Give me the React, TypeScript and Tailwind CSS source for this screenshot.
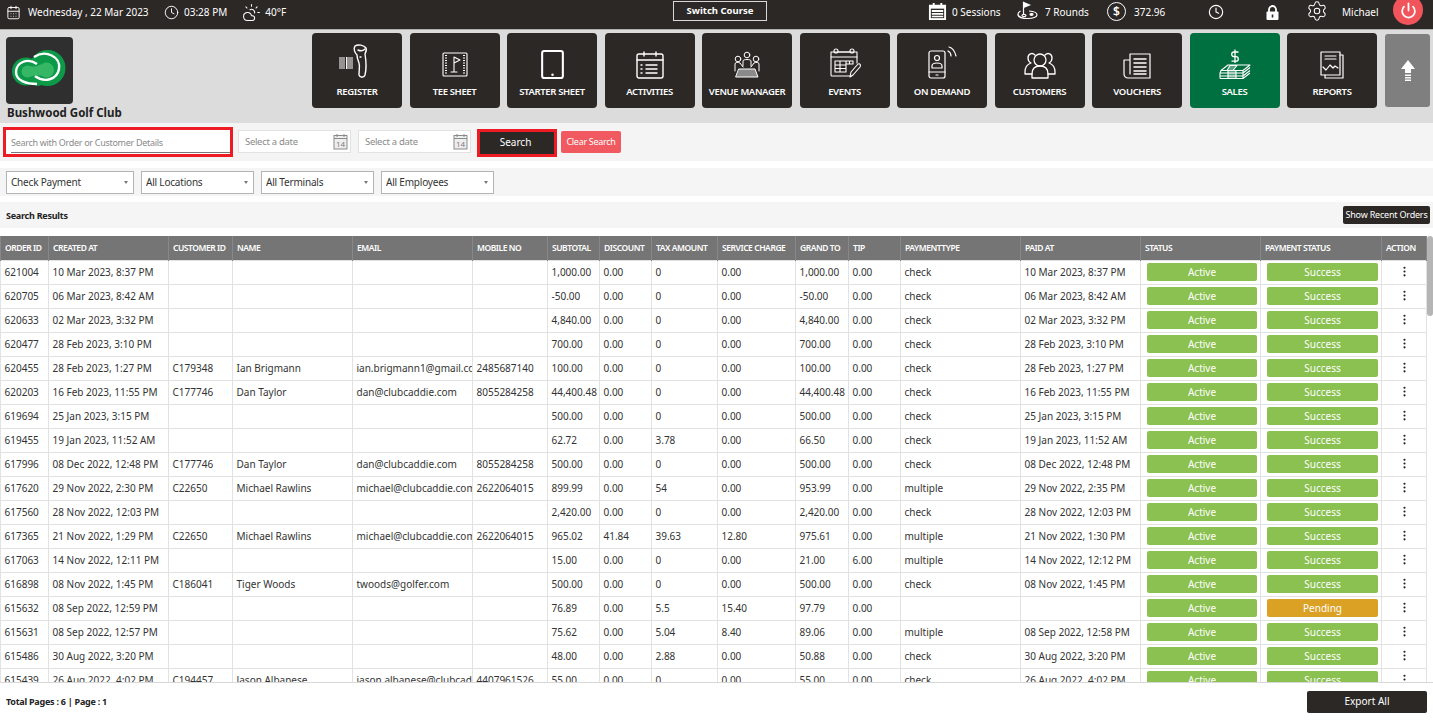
import { CalendarDays, Clock, CloudSun, Settings, Power, EllipsisVertical } from 'lucide-react'

type Row = {
  id: string
  created: string
  cust?: string
  name?: string
  email?: string
  mobile?: string
  sub: string
  disc?: string
  tax: string
  svc?: string
  grand: string
  tip?: string
  type?: string
  paid?: string
  pending?: boolean
}

const rows: Row[] = [
  { id: '621004', created: '10 Mar 2023, 8:37 PM', sub: '1,000.00', tax: '0', grand: '1,000.00', type: 'check', paid: '10 Mar 2023, 8:37 PM' },
  { id: '620705', created: '06 Mar 2023, 8:42 AM', sub: '-50.00', tax: '0', grand: '-50.00', type: 'check', paid: '06 Mar 2023, 8:42 AM' },
  { id: '620633', created: '02 Mar 2023, 3:32 PM', sub: '4,840.00', tax: '0', grand: '4,840.00', type: 'check', paid: '02 Mar 2023, 3:32 PM' },
  { id: '620477', created: '28 Feb 2023, 3:10 PM', sub: '700.00', tax: '0', grand: '700.00', type: 'check', paid: '28 Feb 2023, 3:10 PM' },
  { id: '620455', created: '28 Feb 2023, 1:27 PM', cust: 'C179348', name: 'Ian Brigmann', email: 'ian.brigmann1@gmail.com', mobile: '2485687140', sub: '100.00', tax: '0', grand: '100.00', type: 'check', paid: '28 Feb 2023, 1:27 PM' },
  { id: '620203', created: '16 Feb 2023, 11:55 PM', cust: 'C177746', name: 'Dan Taylor', email: 'dan@clubcaddie.com', mobile: '8055284258', sub: '44,400.48', tax: '0', grand: '44,400.48', type: 'check', paid: '16 Feb 2023, 11:55 PM' },
  { id: '619694', created: '25 Jan 2023, 3:15 PM', sub: '500.00', tax: '0', grand: '500.00', type: 'check', paid: '25 Jan 2023, 3:15 PM' },
  { id: '619455', created: '19 Jan 2023, 11:52 AM', sub: '62.72', tax: '3.78', grand: '66.50', type: 'check', paid: '19 Jan 2023, 11:52 AM' },
  { id: '617996', created: '08 Dec 2022, 12:48 PM', cust: 'C177746', name: 'Dan Taylor', email: 'dan@clubcaddie.com', mobile: '8055284258', sub: '500.00', tax: '0', grand: '500.00', type: 'check', paid: '08 Dec 2022, 12:48 PM' },
  { id: '617620', created: '29 Nov 2022, 2:30 PM', cust: 'C22650', name: 'Michael Rawlins', email: 'michael@clubcaddie.com', mobile: '2622064015', sub: '899.99', tax: '54', grand: '953.99', type: 'multiple', paid: '29 Nov 2022, 2:35 PM' },
  { id: '617560', created: '28 Nov 2022, 12:03 PM', sub: '2,420.00', tax: '0', grand: '2,420.00', type: 'check', paid: '28 Nov 2022, 12:03 PM' },
  { id: '617365', created: '21 Nov 2022, 1:29 PM', cust: 'C22650', name: 'Michael Rawlins', email: 'michael@clubcaddie.com', mobile: '2622064015', sub: '965.02', disc: '41.84', tax: '39.63', svc: '12.80', grand: '975.61', type: 'multiple', paid: '21 Nov 2022, 1:30 PM' },
  { id: '617063', created: '14 Nov 2022, 12:11 PM', sub: '15.00', tax: '0', grand: '21.00', tip: '6.00', type: 'multiple', paid: '14 Nov 2022, 12:12 PM' },
  { id: '616898', created: '08 Nov 2022, 1:45 PM', cust: 'C186041', name: 'Tiger Woods', email: 'twoods@golfer.com', sub: '500.00', tax: '0', grand: '500.00', type: 'check', paid: '08 Nov 2022, 1:45 PM' },
  { id: '615632', created: '08 Sep 2022, 12:59 PM', sub: '76.89', tax: '5.5', svc: '15.40', grand: '97.79', pending: true },
  { id: '615631', created: '08 Sep 2022, 12:57 PM', sub: '75.62', tax: '5.04', svc: '8.40', grand: '89.06', type: 'multiple', paid: '08 Sep 2022, 12:58 PM' },
  { id: '615486', created: '30 Aug 2022, 3:20 PM', sub: '48.00', tax: '2.88', grand: '50.88', type: 'check', paid: '30 Aug 2022, 3:20 PM' },
  { id: '615439', created: '26 Aug 2022, 4:02 PM', cust: 'C194457', name: 'Jason Albanese', email: 'jason.albanese@clubcaddie.com', mobile: '4407961526', sub: '55.00', tax: '0', grand: '55.00', type: 'check', paid: '26 Aug 2022, 4:02 PM' },
]

const cols = [
  { title: 'ORDER ID', w: 'w-[48px]' },
  { title: 'CREATED AT', w: 'w-[120px]' },
  { title: 'CUSTOMER ID', w: 'w-[64px]' },
  { title: 'NAME', w: 'w-[120px]' },
  { title: 'EMAIL', w: 'w-[120px]' },
  { title: 'MOBILE NO', w: 'w-[75px]' },
  { title: 'SUBTOTAL', w: 'w-[52px]' },
  { title: 'DISCOUNT', w: 'w-[52px]' },
  { title: 'TAX AMOUNT', w: 'w-[66px]' },
  { title: 'SERVICE CHARGE', w: 'w-[78px]' },
  { title: 'GRAND TO', w: 'w-[53px]' },
  { title: 'TIP', w: 'w-[52px]' },
  { title: 'PAYMENTTYPE', w: 'w-[120px]' },
  { title: 'PAID AT', w: 'w-[120px]' },
  { title: 'STATUS', w: 'w-[120px]' },
  { title: 'PAYMENT STATUS', w: 'w-[121px]' },
  { title: 'ACTION', w: 'w-[45px]' },
]

const ic = { fill: 'none', stroke: 'white', strokeWidth: 1.4, strokeLinejoin: 'round', strokeLinecap: 'round' } as const

const ScannerIcon = () => (
  <svg width="36" height="36" viewBox="0 0 36 36" {...ic}>
    <path d="M16 3c3-2 9-1 11 2 1 2 0 4-1 6 1 6 2 13 0 21-1 3-5 3-6 0 0-5 1-9 0-12-1-3-2-5-2-8-2-2-4-6-2-9z" />
    <path d="M19 7c2 1 5 1 7-1M21 14h1" />
    <path d="M1 14v12M3 14v12M5 14v12M7.500 14v12M9 14v12M11 14v12M13 14v12" strokeWidth="1" strokeLinecap="butt" />
  </svg>
)
const TeeIcon = () => (
  <svg width="28" height="30" viewBox="0 0 28 28" {...ic} strokeWidth="1.100">
    <rect x="2" y="3" width="24" height="23" rx="1" />
    <path d="M13 22V7l6 3-6 3M10 22h6" />
    <path d="M5 5v19M23 5v19" strokeDasharray="1 1.500" strokeWidth="2" strokeLinecap="butt" />
  </svg>
)
const TabletIcon = () => (
  <svg width="23" height="29" viewBox="0 0 22 28">
    <rect x="1" y="1" width="20" height="26" rx="2" fill="none" stroke="white" strokeWidth="2" />
    <rect x="3" y="4" width="16" height="17" fill="#2c2826" />
    <circle cx="11" cy="24" r="1.200" fill="white" />
  </svg>
)
const ActivitiesIcon = () => (
  <svg width="28" height="28" viewBox="0 0 28 28" {...ic}>
    <rect x="1" y="3" width="26" height="24" rx="2" />
    <path d="M1 9h26M8 1v4M20 1v4M10 14h11M10 18h11M10 22h11M5 14h1M5 18h1M5 22h1" />
  </svg>
)
const VenueIcon = () => (
  <svg width="28" height="28" viewBox="0 0 28 28" {...ic} strokeWidth="1">
    <circle cx="14" cy="4" r="2.800" />
    <circle cx="5" cy="8" r="2.800" />
    <circle cx="23" cy="8" r="2.800" />
    <path d="M10 15v-5c0-2 8-2 8 0v5M2 20v-7c0-2 3-2 5-1l3 4M26 20v-7c0-2-3-2-5-1l-3 4" />
    <path d="M6 18h16l3 8H3z" fill="#8a8a8a" />
  </svg>
)
const EventsIcon = () => (
  <svg width="32" height="32" viewBox="0 0 32 32" {...ic} strokeWidth="1.100">
    <path d="M22 29H3a1 1 0 0 1-1-1V5h26v11" />
    <path d="M2 10h26M9 5h12" />
    <circle cx="7" cy="4" r="2" />
    <circle cx="23" cy="4" r="2" />
    <path d="M6 14h18v3H17v8H6zM6 18h11M6 21.500h11M11 14v11M17 14v3M20.500 14v3" />
    <path d="M21 30l1-5 7-8c2-1 3 1 2 3l-7 8z" />
  </svg>
)
const DemandIcon = () => (
  <svg width="32" height="34" viewBox="0 0 32 34" {...ic} strokeWidth="1.200">
    <rect x="3" y="6" width="16" height="27" rx="2" />
    <path d="M3 27h16M10 30h2" />
    <circle cx="11" cy="13" r="2.500" />
    <path d="M6 23v-2c0-4 10-4 10 0v2zM22 6c2 1 3 3 3 5M23 2c4 1 6 5 7 9" />
  </svg>
)
const CustomersIcon = () => (
  <svg width="32" height="28" viewBox="0 0 32 28" {...ic} strokeWidth="1.300">
    <circle cx="16" cy="9" r="6" />
    <path d="M8 27v-4c0-6 4-8 8-8s8 2 8 8v4z" />
    <path d="M11 4c-3-3-7-1-7 3 0 2 1 4 3 5-3 1-6 4-6 9v2h7M21 4c3-3 7-1 7 3 0 2-1 4-3 5 3 1 6 4 6 9v2h-7" />
  </svg>
)
const VouchersIcon = () => (
  <svg width="28" height="26" viewBox="0 0 28 26" {...ic} strokeWidth="1.200">
    <path d="M7 1h20v24H5a4 4 0 0 1-4-4V7h6zM7 7v14" />
    <path d="M11 6h12M11 10h12M11 14h12M11 18h12M11 21h12" strokeWidth="1.500" />
  </svg>
)
const SalesIcon = () => (
  <svg width="32" height="30" viewBox="0 0 32 30" {...ic} strokeWidth="1.100" strokeLinecap="butt">
    <path d="M19.500 3h-4.500a2.300 2.300 0 0 0 0 4.600h2a2.300 2.300 0 0 1 0 4.600h-4.500M16 0.500v13.500" strokeWidth="1.300" />
    <path d="M9 16h22l-7 5.500H2zM2 21.500L1 24h23l7-5.500M1 27h23l7-5.500M1 29.500h23l7-5.500M1 24v5.500M24 21.500v8" />
    <path d="M11 16.500h7l-4 5h-6zM9 21.500h8v8h-8z" fill="white" fillOpacity="0.350" />
  </svg>
)
const ReportsIcon = () => (
  <svg width="24" height="28" viewBox="0 0 24 28" {...ic} strokeWidth="1.200">
    <path d="M20 4h3v23H5v-3" />
    <rect x="1" y="1" width="19" height="23" />
    <path d="M5 5h11M5 8h11M3 16l3 3 4-5 3 3 2-2 3 2" />
  </svg>
)
const ArrowUpIcon = () => (
  <svg width="14" height="22" viewBox="0 0 14 22" fill="white">
    <path d="M7 0l7 9H10v4H4V9H0z" />
    <path d="M4 14.500h6v1.500H4zM4 17h6v1.500H4zM4 19.500h6v1.500H4z" />
  </svg>
)

const tiles = [
  { label: 'REGISTER', icon: <ScannerIcon /> },
  { label: 'TEE SHEET', icon: <TeeIcon /> },
  { label: 'STARTER SHEET', icon: <TabletIcon /> },
  { label: 'ACTIVITIES', icon: <ActivitiesIcon /> },
  { label: 'VENUE MANAGER', icon: <VenueIcon /> },
  { label: 'EVENTS', icon: <EventsIcon /> },
  { label: 'ON DEMAND', icon: <DemandIcon /> },
  { label: 'CUSTOMERS', icon: <CustomersIcon /> },
  { label: 'VOUCHERS', icon: <VouchersIcon /> },
  { label: 'SALES', icon: <SalesIcon />, active: true },
  { label: 'REPORTS', icon: <ReportsIcon /> },
]

function DateInput({ className }: { className: string }) {
  return (
    <div className={`flex h-[23px] w-[113px] items-center justify-between border border-[#e2e2e2] bg-white pl-[6px] pr-[2px] ${className}`}>
      <span className="pt-[2px] text-[9.500px] tracking-[-0.3px] text-[#8a8a8a]">Select a date</span>
      <svg width="15" height="17" viewBox="0 0 15 17" fill="none" stroke="#8a8a8a">
        <rect x="1" y="2.500" width="13" height="13.500" fill="#eee" />
        <path d="M1 5.500h13M4 1v3M11 1v3" />
        <text x="3" y="14" fontSize="8" fill="#777" stroke="none" fontFamily="Open Sans">14</text>
      </svg>
    </div>
  )
}

function Select({ label, w }: { label: string; w: string }) {
  return (
    <div className={`flex h-[23px] items-center justify-between border border-[#b4b4b4] bg-white pl-[4px] pr-[5px] ${w}`}>
      <span className="text-[10px] tracking-[-0.2px] text-[#333]">{label}</span>
      <span className="h-0 w-0 border-x-[2.500px] border-t-[3px] border-x-transparent border-t-[#777]" />
    </div>
  )
}

export default function App() {
  return (
    <div className="relative flex h-screen flex-col overflow-hidden bg-white font-['Open_Sans',sans-serif] text-[#2b2b2b]">
      <div className="relative flex h-[29px] shrink-0 items-center bg-[#2c2826] pb-[5px] text-[10px] text-white">
        <CalendarDays size={15} className="ml-[6px]" strokeWidth={1.500} />
        <span className="ml-[7px] w-[130px]">Wednesday , 22 Mar 2023</span>
        <Clock size={15} strokeWidth={1.500} className="ml-[6px]" />
        <span className="ml-[5px]">03:28 PM</span>
        <CloudSun size={19} strokeWidth={1.300} className="ml-[15px]" />
        <span className="ml-[4px]">40°F</span>

        <button className="absolute left-[673px] top-[1px] h-[20px] w-[94px] border border-[#d8d8d8] text-[9.500px] font-bold text-white">
          Switch Course
        </button>

        <svg width="19" height="19" viewBox="0 0 20 20" className="absolute left-[928px] top-[2px]" fill="white">
          <path d="M1 3h18v16H1zM5 1h2v3H5zM13 1h2v3h-2z" />
          <path d="M3 7h14v10H3z" fill="#2c2826" />
          <path d="M4 8.500h12v2H4zM4 11.500h12v2H4zM4 14.500h12v1.500H4z" />
        </svg>
        <span className="absolute left-[952px]">0 Sessions</span>
        <svg width="21" height="20" viewBox="0 0 21 20" className="absolute left-[1017px] top-[1px]" fill="none" stroke="white" strokeWidth="1.200">
          <path d="M6.500 13V1.500l6 2.500-6 2.500" fill="white" />
          <path d="M3.500 10C1.500 11 .7 12.500 1 14c.5 2 5 3.500 10 3.500s9-1.500 9-3.500c0-2-3-3.700-8-4" />
          <ellipse cx="7" cy="14.500" rx="2" ry="1.200" />
          <ellipse cx="14.500" cy="13.500" rx="1.500" ry=".8" fill="white" />
        </svg>
        <span className="absolute left-[1045px]">7 Rounds</span>
        <div className="absolute left-[1107px] top-[2px] flex h-[19px] w-[19px] items-center justify-center rounded-full border border-white text-[12px] font-semibold leading-none">$</div>
        <span className="absolute left-[1134px]">372.96</span>
        <Clock size={16} strokeWidth={1.700} className="absolute left-[1208px] top-[4px]" />
        <svg width="13" height="15" viewBox="0 0 13 15" className="absolute left-[1266px] top-[5px]">
          <path d="M3 7V4.500a3.500 3.500 0 0 1 7 0V7" fill="none" stroke="white" strokeWidth="1.800" />
          <rect x="0.500" y="6.500" width="12" height="8.500" rx="1" fill="white" />
          <path d="M5.700 9.500h1.600v3H5.700z" fill="#2c2826" />
        </svg>
        <Settings size={22} strokeWidth={1.100} className="absolute left-[1306px] top-[0px]" />
        <span className="absolute left-[1342px]">Michael</span>
        <div className="absolute left-[1393px] top-[-5px] flex h-[30px] w-[30px] items-center justify-center rounded-full bg-[#f2545b]">
          <Power size={17} strokeWidth={2.500} />
        </div>
      </div>

      <div className="relative h-[94px] shrink-0 border-t border-[#b0b0b0] bg-[#dcdcdc]">
        <div className="absolute left-[6px] top-[7px] h-[67px] w-[67px] rounded-[4px] bg-[#2f2f2f]">
          <svg width="67" height="67" viewBox="0 0 67 67" fill="none">
            <circle cx="20" cy="34.500" r="14" fill="#0d9a48" />
            <circle cx="41.500" cy="31" r="18" fill="#0d9a48" />
            <circle cx="32" cy="39" r="10" fill="#0d9a48" />
            <path d="M28 20C40 12 55 20 53 32 51 43 38 46 29 39" stroke="white" strokeWidth="2.400" />
            <path d="M31 27C21 20 10 26 10 35 10 44 21 47 31 47" stroke="white" strokeWidth="2.400" />
            <circle cx="21.500" cy="34.500" r="6" fill="#35b765" />
            <circle cx="40.500" cy="33" r="7.500" fill="#35b765" />
            <path d="M21 29C27 29 29 31 35 27L35 39C29 37 27 40 21 40z" fill="#35b765" />
          </svg>
        </div>
        <div className="absolute left-[7px] top-[75px] text-[11.500px] font-bold leading-[16px] text-[#222]">Bushwood Golf Club</div>

        <div className="absolute left-[312px] top-[3px] flex gap-[7.500px]">
          {tiles.map((t) => (
            <div
              key={t.label}
              className={`flex h-[75px] w-[90px] flex-col items-center rounded-[4px] text-white ${t.active ? 'bg-[#007040]' : 'bg-[#2c2826]'}`}
            >
              <div className="flex h-[47px] w-full items-end justify-center pb-[1px]">{t.icon}</div>
              <div className="mt-[5px] text-[9.500px] font-semibold leading-[14px] tracking-[-0.35px]">{t.label}</div>
            </div>
          ))}
        </div>
        <div className="absolute left-[1385px] top-[4px] flex h-[73px] w-[45px] items-center justify-center rounded-[3px] bg-[#7f7f7f]">
          <ArrowUpIcon />
        </div>
      </div>

      <div className="relative h-[38px] shrink-0 bg-[#f4f4f4]">
        <div className="absolute left-[3px] top-[4px] h-[30px] w-[230px] border-[3px] border-[#ed1c24] bg-white pl-[5px]">
          <div className="flex h-[23px] w-full items-center border-b border-[#777] pt-[3px] text-[9px] tracking-[-0.3px] text-[#8a8a8a]">Search with Order or Customer Details</div>
        </div>
        <DateInput className="absolute left-[238px] top-[7px]" />
        <DateInput className="absolute left-[358px] top-[7px]" />
        <div className="absolute left-[477px] top-[6px] flex h-[28px] w-[80px] items-center justify-center border-[3px] border-[#ed1c24] bg-[#2c2826] pb-[2px] pr-[3px] text-[10px] text-white">Search</div>
        <div className="absolute left-[561px] top-[8px] flex h-[22px] w-[60px] items-center justify-center rounded-[2px] bg-[#f0595f] text-[9px] tracking-[-0.3px] text-white">Clear Search</div>
      </div>

      <div className="h-[7px] shrink-0 bg-white" />
      <div className="flex h-[28px] shrink-0 items-center gap-[7px] bg-[#f5f5f5] pl-[6px]">
        <Select label="Check Payment" w="w-[128px]" />
        <Select label="All Locations" w="w-[113px]" />
        <Select label="All Terminals" w="w-[113px]" />
        <Select label="All Employees" w="w-[113px]" />
      </div>
      <div className="h-[6px] shrink-0 bg-white" />
      <div className="flex h-[26px] shrink-0 items-center justify-between bg-[#f5f5f5] pl-[6px] pr-[3px]">
        <span className="pt-[1px] text-[9px] font-bold tracking-[-0.25px] text-[#222]">Search Results</span>
        <div className="flex h-[18px] w-[87px] items-center justify-center rounded-[2px] bg-[#2c2826] text-[9px] tracking-[-0.2px] text-white">Show Recent Orders</div>
      </div>
      <div className="h-[8px] shrink-0 bg-white" />

      <div className="relative min-h-0 flex-1 overflow-hidden">
        <table className="w-[1426px] table-fixed border-collapse text-[10px] text-[#333]">
          <thead>
            <tr className="h-[24px] bg-[#757575] text-left text-[8.500px] font-semibold text-white">
              {cols.map((c) => (
                <th key={c.title} className={`${c.w} overflow-hidden whitespace-nowrap border-x border-[#888] pl-[4px] pt-[1px] font-semibold tracking-[-0.45px]`}>
                  {c.title}
                </th>
              ))}
            </tr>
          </thead>
          <tbody>
            {rows.map((r) => (
              <tr key={r.id} className="h-[24px]">
                {[r.id, r.created, r.cust, r.name, r.email, r.mobile, r.sub, r.disc ?? '0.00', r.tax, r.svc ?? '0.00', r.grand, r.tip ?? '0.00', r.type, r.paid].map((v, i) => (
                  <td key={i} className="overflow-hidden whitespace-nowrap border border-[#e2e2e2] pl-[3.500px] leading-[23px]">
                    {v}
                  </td>
                ))}
                <td className="border border-[#e2e2e2] pl-[6px] pr-[3px]">
                  <div className="flex h-[18px] items-center justify-center rounded-[2px] bg-[#8bc151] text-[10px] text-white">Active</div>
                </td>
                <td className="border border-[#e2e2e2] pl-[6px] pr-[3px]">
                  <div className={`flex h-[18px] items-center justify-center rounded-[2px] text-[10px] text-white ${r.pending ? 'bg-[#dba124]' : 'bg-[#8bc151]'}`}>
                    {r.pending ? 'Pending' : 'Success'}
                  </div>
                </td>
                <td className="border border-[#e2e2e2] text-center">
                  <EllipsisVertical size={13} className="mx-auto -translate-y-[1px] text-[#222]" strokeWidth={2} />
                </td>
              </tr>
            ))}
          </tbody>
        </table>
        <div className="absolute left-[1427px] top-0 h-[80px] w-[6px] rounded-[3px] bg-[#b5b5b5]" />
      </div>

      <div className="flex h-[38px] shrink-0 items-center justify-between border-t border-[#d8d8d8] bg-white pl-[6px] pr-[6px]">
        <span className="text-[9px] font-bold tracking-[-0.25px] text-[#222]">Total Pages : 6 | Page : 1</span>
        <div className="flex h-[22px] w-[120px] items-center justify-center rounded-[2px] bg-[#2c2826] text-[10px] text-white">Export All</div>
      </div>
    </div>
  )
}
